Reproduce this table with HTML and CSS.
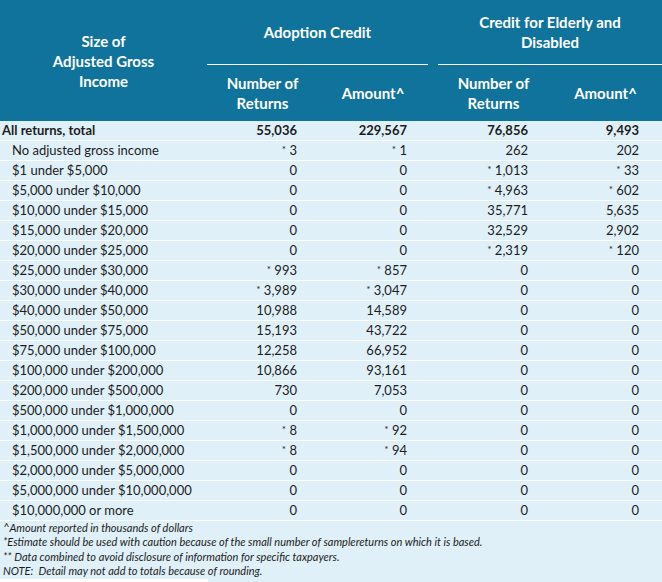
FILE: index.html
```html
<!DOCTYPE html>
<html lang="en">
<head>
<meta charset="utf-8">
<title>Adoption Credit and Credit for Elderly and Disabled</title>
<link rel="stylesheet" href="styles.css">
</head>
<body>
<table class="tbl">
  <colgroup>
    <col class="c1"><col class="c2"><col class="c3"><col class="c4"><col class="c5">
  </colgroup>
  <thead>
    <tr class="h1">
      <th rowspan="2" class="size">Size of<br>Adjusted Gross<br>Income</th>
      <th colspan="2" class="grp grp-a"><div class="grp-in">Adoption Credit</div></th>
      <th colspan="2" class="grp grp-e"><div class="grp-in">Credit for Elderly and<br>Disabled</div></th>
    </tr>
    <tr class="h2">
      <th class="sub">Number of<br>Returns</th>
      <th class="sub sub-a">Amount^</th>
      <th class="sub sub-e">Number of<br>Returns</th>
      <th class="sub">Amount^</th>
    </tr>
  </thead>
  <tbody>
    <tr class="total"><td class="lbl">All returns, total</td><td>55,036</td><td>229,567</td><td>76,856</td><td>9,493</td></tr>
    <tr><td class="lbl">No adjusted gross income</td><td><span class="ast">*</span> 3</td><td><span class="ast">*</span> 1</td><td>262</td><td>202</td></tr>
    <tr><td class="lbl">$1 under $5,000</td><td>0</td><td>0</td><td><span class="ast">*</span> 1,013</td><td><span class="ast">*</span> 33</td></tr>
    <tr><td class="lbl">$5,000 under $10,000</td><td>0</td><td>0</td><td><span class="ast">*</span> 4,963</td><td><span class="ast">*</span> 602</td></tr>
    <tr><td class="lbl">$10,000 under $15,000</td><td>0</td><td>0</td><td>35,771</td><td>5,635</td></tr>
    <tr><td class="lbl">$15,000 under $20,000</td><td>0</td><td>0</td><td>32,529</td><td>2,902</td></tr>
    <tr><td class="lbl">$20,000 under $25,000</td><td>0</td><td>0</td><td><span class="ast">*</span> 2,319</td><td><span class="ast">*</span> 120</td></tr>
    <tr><td class="lbl">$25,000 under $30,000</td><td><span class="ast">*</span> 993</td><td><span class="ast">*</span> 857</td><td>0</td><td>0</td></tr>
    <tr><td class="lbl">$30,000 under $40,000</td><td><span class="ast">*</span> 3,989</td><td><span class="ast">*</span> 3,047</td><td>0</td><td>0</td></tr>
    <tr><td class="lbl">$40,000 under $50,000</td><td>10,988</td><td>14,589</td><td>0</td><td>0</td></tr>
    <tr><td class="lbl">$50,000 under $75,000</td><td>15,193</td><td>43,722</td><td>0</td><td>0</td></tr>
    <tr><td class="lbl">$75,000 under $100,000</td><td>12,258</td><td>66,952</td><td>0</td><td>0</td></tr>
    <tr><td class="lbl">$100,000 under $200,000</td><td>10,866</td><td>93,161</td><td>0</td><td>0</td></tr>
    <tr><td class="lbl">$200,000 under $500,000</td><td>730</td><td>7,053</td><td>0</td><td>0</td></tr>
    <tr><td class="lbl">$500,000 under $1,000,000</td><td>0</td><td>0</td><td>0</td><td>0</td></tr>
    <tr><td class="lbl">$1,000,000 under $1,500,000</td><td><span class="ast">*</span> 8</td><td><span class="ast">*</span> 92</td><td>0</td><td>0</td></tr>
    <tr><td class="lbl">$1,500,000 under $2,000,000</td><td><span class="ast">*</span> 8</td><td><span class="ast">*</span> 94</td><td>0</td><td>0</td></tr>
    <tr><td class="lbl">$2,000,000 under $5,000,000</td><td>0</td><td>0</td><td>0</td><td>0</td></tr>
    <tr><td class="lbl">$5,000,000 under $10,000,000</td><td>0</td><td>0</td><td>0</td><td>0</td></tr>
    <tr><td class="lbl">$10,000,000 or more</td><td>0</td><td>0</td><td>0</td><td>0</td></tr>
  </tbody>
</table>
<div class="notes">
  <p>^Amount reported in thousands of dollars</p>
  <p>*Estimate should be used with caution because of the small number of samplereturns on which it is based.</p>
  <p>** Data combined to avoid disclosure of information for specific taxpayers.</p>
  <p>NOTE:&nbsp; Detail may not add to totals because of rounding.</p>
</div>
<div class="tail"><div class="tail-w"></div></div>
</body>
</html>
```

FILE: styles.css
```css
html, body {
  margin: 0;
  padding: 0;
  background: #ffffff;
}
body {
  font-family: Lato, "Open Sans", Arial, sans-serif;
  color: #1c1c1c;
  width: 662px;
}
.tbl {
  width: 662px;
  border-collapse: collapse;
  table-layout: fixed;
}
.c1 { width: 207px; }
.c2 { width: 111px; }
.c3 { width: 115px; }
.c4 { width: 116px; }
.c5 { width: 113px; }

thead th {
  background: #10739c;
  color: #ffffff;
  font-weight: 700;
  font-size: 15px;
  line-height: 20px;
  text-align: center;
  padding: 0;
}
.h1 th { height: 65px; }
.h2 th { height: 55px; }
.size { vertical-align: middle; padding-top: 1px; }
.grp { vertical-align: top; }
.grp-a { padding-right: 10px; }
.grp-in {
  height: 64px;
  border-bottom: 1px solid #ffffff;
  display: flex;
  align-items: center;
  justify-content: center;
}
.grp-e .grp-in { margin-left: 5px; }
.grp-a .grp-in { margin-right: -5px; }
.sub { vertical-align: middle; padding-bottom: 1px; }
.sub-a { padding-right: 5px; }
.sub-e { padding-left: 5px; }

tbody td {
  background: #e0f0f8;
  font-size: 13px;
  line-height: 19px;
  height: 19px;
  padding: 0 21px 0 0;
  text-align: right;
  border-bottom: 1px solid #ffffff;
  white-space: nowrap;
  overflow: hidden;
}
tbody td:nth-child(3) { padding-right: 26px; }
tbody td:nth-child(5) { padding-right: 23px; }
tbody td.lbl {
  text-align: left;
  padding: 0 0 0 12px;
}
.total td { font-weight: 700; }
.total td.lbl { padding-left: 2px; }
.ast {
  font-size: 10px;
  line-height: 0;
  vertical-align: 2px;
}

.notes {
  background: #e0f0f8;
  padding: 0 0 0 3px;
  height: 58px;
  box-sizing: border-box;
}
.notes p {
  margin: 0;
  font-size: 11px;
  line-height: 14.3px;
  font-style: italic;
}
.tail {
  height: 4px;
  background: #e0f0f8;
  display: flex;
}
.tail-w {
  width: 208px;
  background: #ffffff;
}
```
